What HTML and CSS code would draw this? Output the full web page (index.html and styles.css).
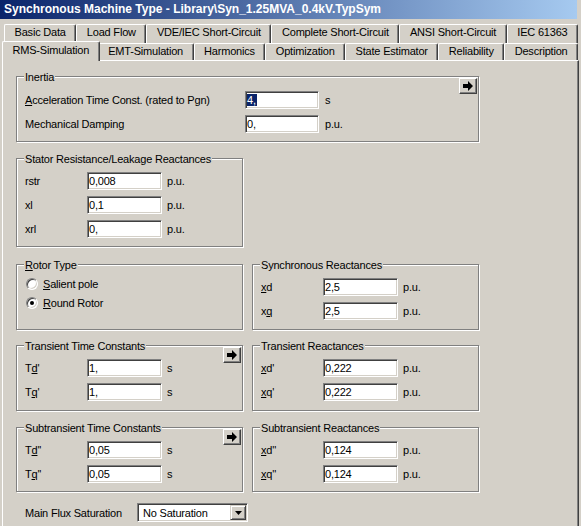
FILE: index.html
```html
<!DOCTYPE html>
<html lang="en">
<head>
    <meta charset="UTF-8">
    <title>Synchronous Machine Type</title>
    <link rel="stylesheet" href="styles.css">
</head>
<body>
    <div class="titlebar">Synchronous Machine Type - Library\Syn_1.25MVA_0.4kV.TypSym</div>

    <div class="tabstrip">
        <div class="tab-row back">
            <div class="tab">Basic Data</div>
            <div class="tab">Load Flow</div>
            <div class="tab">VDE/IEC Short-Circuit</div>
            <div class="tab">Complete Short-Circuit</div>
            <div class="tab">ANSI Short-Circuit</div>
            <div class="tab">IEC 61363</div>
        </div>
        <div class="tab-row front">
            <div class="tab active">RMS-Simulation</div>
            <div class="tab">EMT-Simulation</div>
            <div class="tab">Harmonics</div>
            <div class="tab">Optimization</div>
            <div class="tab">State Estimator</div>
            <div class="tab">Reliability</div>
            <div class="tab">Description</div>
        </div>
    </div>

    <div class="panel">
        <div class="group inertia">
            <span class="group-title">Inertia</span>
            <button class="more"><svg width="10" height="10" viewBox="0 0 10 10"><path d="M0 3h5V0l5 5-5 5V7H0z" fill="#000"/></svg></button>
            <div class="field">
                <span><u>A</u>cceleration Time Const. (rated to Pgn)</span>
                <div class="edit"><span class="selected">4,</span></div>
                <span>s</span>
            </div>
            <div class="field">
                <span>Mechanical Damping</span>
                <div class="edit">0,</div>
                <span>p.u.</span>
            </div>
        </div>

        <div class="group stator">
            <span class="group-title">Stator Resistance/Leakage Reactances</span>
            <div class="field">
                <span>rstr</span>
                <div class="edit">0,008</div>
                <span>p.u.</span>
            </div>
            <div class="field">
                <span>xl</span>
                <div class="edit">0,1</div>
                <span>p.u.</span>
            </div>
            <div class="field">
                <span>xrl</span>
                <div class="edit">0,</div>
                <span>p.u.</span>
            </div>
        </div>

        <div class="pair rotor-row">
            <div class="group rotor">
                <span class="group-title"><u>R</u>otor Type</span>
                <div class="radio"><span class="radio-box"></span><span><u>S</u>alient pole</span></div>
                <div class="radio"><span class="radio-box checked"></span><span><u>R</u>ound Rotor</span></div>
            </div>
            <div class="group">
                <span class="group-title">Synchronous Reactances</span>
                <div class="field">
                    <span><u>x</u>d</span>
                    <div class="edit">2,5</div>
                    <span>p.u.</span>
                </div>
                <div class="field">
                    <span>x<u>q</u></span>
                    <div class="edit">2,5</div>
                    <span>p.u.</span>
                </div>
            </div>
        </div>

        <div class="pair transient-row">
            <div class="group">
                <span class="group-title">Transient Time Constants</span>
                <button class="more"><svg width="10" height="10" viewBox="0 0 10 10"><path d="M0 3h5V0l5 5-5 5V7H0z" fill="#000"/></svg></button>
                <div class="field">
                    <span>T<u>d</u>'</span>
                    <div class="edit">1,</div>
                    <span>s</span>
                </div>
                <div class="field">
                    <span>T<u>q</u>'</span>
                    <div class="edit">1,</div>
                    <span>s</span>
                </div>
            </div>
            <div class="group">
                <span class="group-title">Transient Reactances</span>
                <div class="field">
                    <span><u>x</u>d'</span>
                    <div class="edit">0,222</div>
                    <span>p.u.</span>
                </div>
                <div class="field">
                    <span><u>x</u>q'</span>
                    <div class="edit">0,222</div>
                    <span>p.u.</span>
                </div>
            </div>
        </div>

        <div class="pair subtransient-row">
            <div class="group">
                <span class="group-title">Subtransient Time Constants</span>
                <button class="more"><svg width="10" height="10" viewBox="0 0 10 10"><path d="M0 3h5V0l5 5-5 5V7H0z" fill="#000"/></svg></button>
                <div class="field">
                    <span>T<u>d</u>''</span>
                    <div class="edit">0,05</div>
                    <span>s</span>
                </div>
                <div class="field">
                    <span>T<u>q</u>''</span>
                    <div class="edit">0,05</div>
                    <span>s</span>
                </div>
            </div>
            <div class="group">
                <span class="group-title">Subtransient Reactances</span>
                <div class="field">
                    <span><u>x</u>d''</span>
                    <div class="edit">0,124</div>
                    <span>p.u.</span>
                </div>
                <div class="field">
                    <span><u>x</u>q''</span>
                    <div class="edit">0,124</div>
                    <span>p.u.</span>
                </div>
            </div>
        </div>

        <div class="flux">
            <span class="flux-label">Main Flux Saturation</span>
            <div class="combo">
                <span>No Saturation</span>
                <span class="combo-btn"><svg width="7" height="4" viewBox="0 0 7 4"><path d="M0 0h7L3.5 4z" fill="#000"/></svg></span>
            </div>
        </div>
    </div>
</body>
</html>
```

FILE: styles.css
```css
* {
    margin: 0;
    padding: 0;
    box-sizing: border-box;
}

body {
    background: #d4d0c8;
    font-family: "Liberation Sans", Arial, sans-serif;
    font-size: 11px;
    letter-spacing: -0.2px;
    color: #000;
    width: 581px;
    height: 526px;
    overflow: hidden;
}

u {
    text-decoration-thickness: 1px;
    text-underline-offset: 1px;
}

.titlebar {
    width: 577px;
    height: 19px;
    padding-left: 4px;
    background: linear-gradient(90deg, #0a246a 0%, #a6caf0 100%);
    color: #fff;
    font-weight: bold;
    font-size: 12px;
    letter-spacing: 0;
    line-height: 19px;
    white-space: nowrap;
}

/* tabs */
.tabstrip {
    margin: 5px 0 0 4px;
    width: 574px;
}

.tab-row {
    display: flex;
}

.tab-row.back {
    height: 19px;
}

.tab-row.front {
    height: 17px;
}

.tab {
    flex: 1 1 auto;
    padding: 0 6px;
    text-align: center;
    white-space: nowrap;
    line-height: 15px;
    background: #d4d0c8;
    border-top: 1px solid #fff;
    border-left: 1px solid #fff;
    border-right: 1px solid #404040;
    box-shadow: inset -1px 0 #808080;
    border-radius: 2px 2px 0 0;
}

.back .tab {
    height: 19px;
}

.front .tab {
    height: 17px;
}

.front .tab.active {
    height: 20px;
    margin: -2px -2px -1px;
    line-height: 16px;
    position: relative;
    z-index: 1;
}

/* page */
.panel {
    margin-left: 2px;
    width: 577px;
    height: 470px;
    padding: 15px 0 0 13px;
    border: 1px solid;
    border-color: #fff #404040 #404040 #fff;
    box-shadow: inset -1px -1px #808080;
}

.group {
    position: relative;
    height: 66px;
    padding: 13px 8px 0;
    border: 1px solid #808080;
    box-shadow: inset 1px 1px #fff, 1px 1px #fff;
}

.group-title {
    position: absolute;
    top: -7px;
    left: 7px;
    padding: 0 1px;
    line-height: 14px;
    background: #d4d0c8;
}

.inertia {
    width: 463px;
    padding-top: 14px;
}

.stator {
    width: 227px;
    height: 89px;
    margin-top: 16px;
}

.pair {
    display: grid;
    grid-template-columns: 227px 227px;
    column-gap: 9px;
}

.rotor-row {
    margin-top: 17px;
}

.transient-row {
    margin-top: 15px;
}

.subtransient-row {
    margin-top: 16px;
}

.subtransient-row .group {
    height: 65px;
}

.field {
    display: grid;
    grid-template-columns: 57px 75px auto;
    column-gap: 5px;
    align-items: center;
    height: 18px;
    margin-bottom: 6px;
    white-space: nowrap;
}

.inertia .field {
    grid-template-columns: 214px 74px auto;
    column-gap: 6px;
}

.edit {
    height: 18px;
    padding-left: 1px;
    line-height: 16px;
    background: #fff;
    border: 1px solid;
    border-color: #808080 #fff #fff #808080;
    box-shadow: inset 1px 1px #404040, inset -1px -1px #d4d0c8;
}

.selected {
    background: #0a246a;
    color: #fff;
    padding-right: 1px;
}

.more {
    position: absolute;
    top: 1px;
    right: 1px;
    width: 18px;
    height: 16px;
    display: flex;
    align-items: center;
    justify-content: center;
    background: #d4d0c8;
    border: 1px solid;
    border-color: #fff #404040 #404040 #fff;
    box-shadow: inset -1px -1px #808080;
}

/* radio buttons */
.rotor {
    padding-top: 12px;
    padding-left: 9px;
}

.radio {
    display: flex;
    align-items: center;
    height: 13px;
    margin-bottom: 6px;
}

.radio-box {
    width: 12px;
    height: 12px;
    margin-right: 5px;
    display: flex;
    align-items: center;
    justify-content: center;
    border-radius: 50%;
    background: #fff;
    border: 1px solid;
    border-color: #808080 #fff #fff #808080;
    box-shadow: inset 1px 1px #404040, inset -1px -1px #d4d0c8;
}

.radio-box.checked::after {
    content: "";
    width: 4px;
    height: 4px;
    border-radius: 50%;
    background: #000;
}

/* saturation combo */
.flux {
    display: flex;
    align-items: center;
    margin-top: 11px;
    padding-left: 9px;
}

.flux-label {
    width: 112px;
}

.combo {
    width: 111px;
    height: 19px;
    padding: 1px 1px 1px 5px;
    display: flex;
    align-items: center;
    background: #fff;
    border: 1px solid;
    border-color: #808080 #fff #fff #808080;
    box-shadow: inset 1px 1px #404040, inset -1px -1px #d4d0c8;
}

.combo-btn {
    margin-left: auto;
    width: 16px;
    height: 15px;
    display: flex;
    align-items: center;
    justify-content: center;
    background: #d4d0c8;
    border: 1px solid;
    border-color: #d4d0c8 #404040 #404040 #d4d0c8;
    box-shadow: inset 1px 1px #fff, inset -1px -1px #808080;
}
```
